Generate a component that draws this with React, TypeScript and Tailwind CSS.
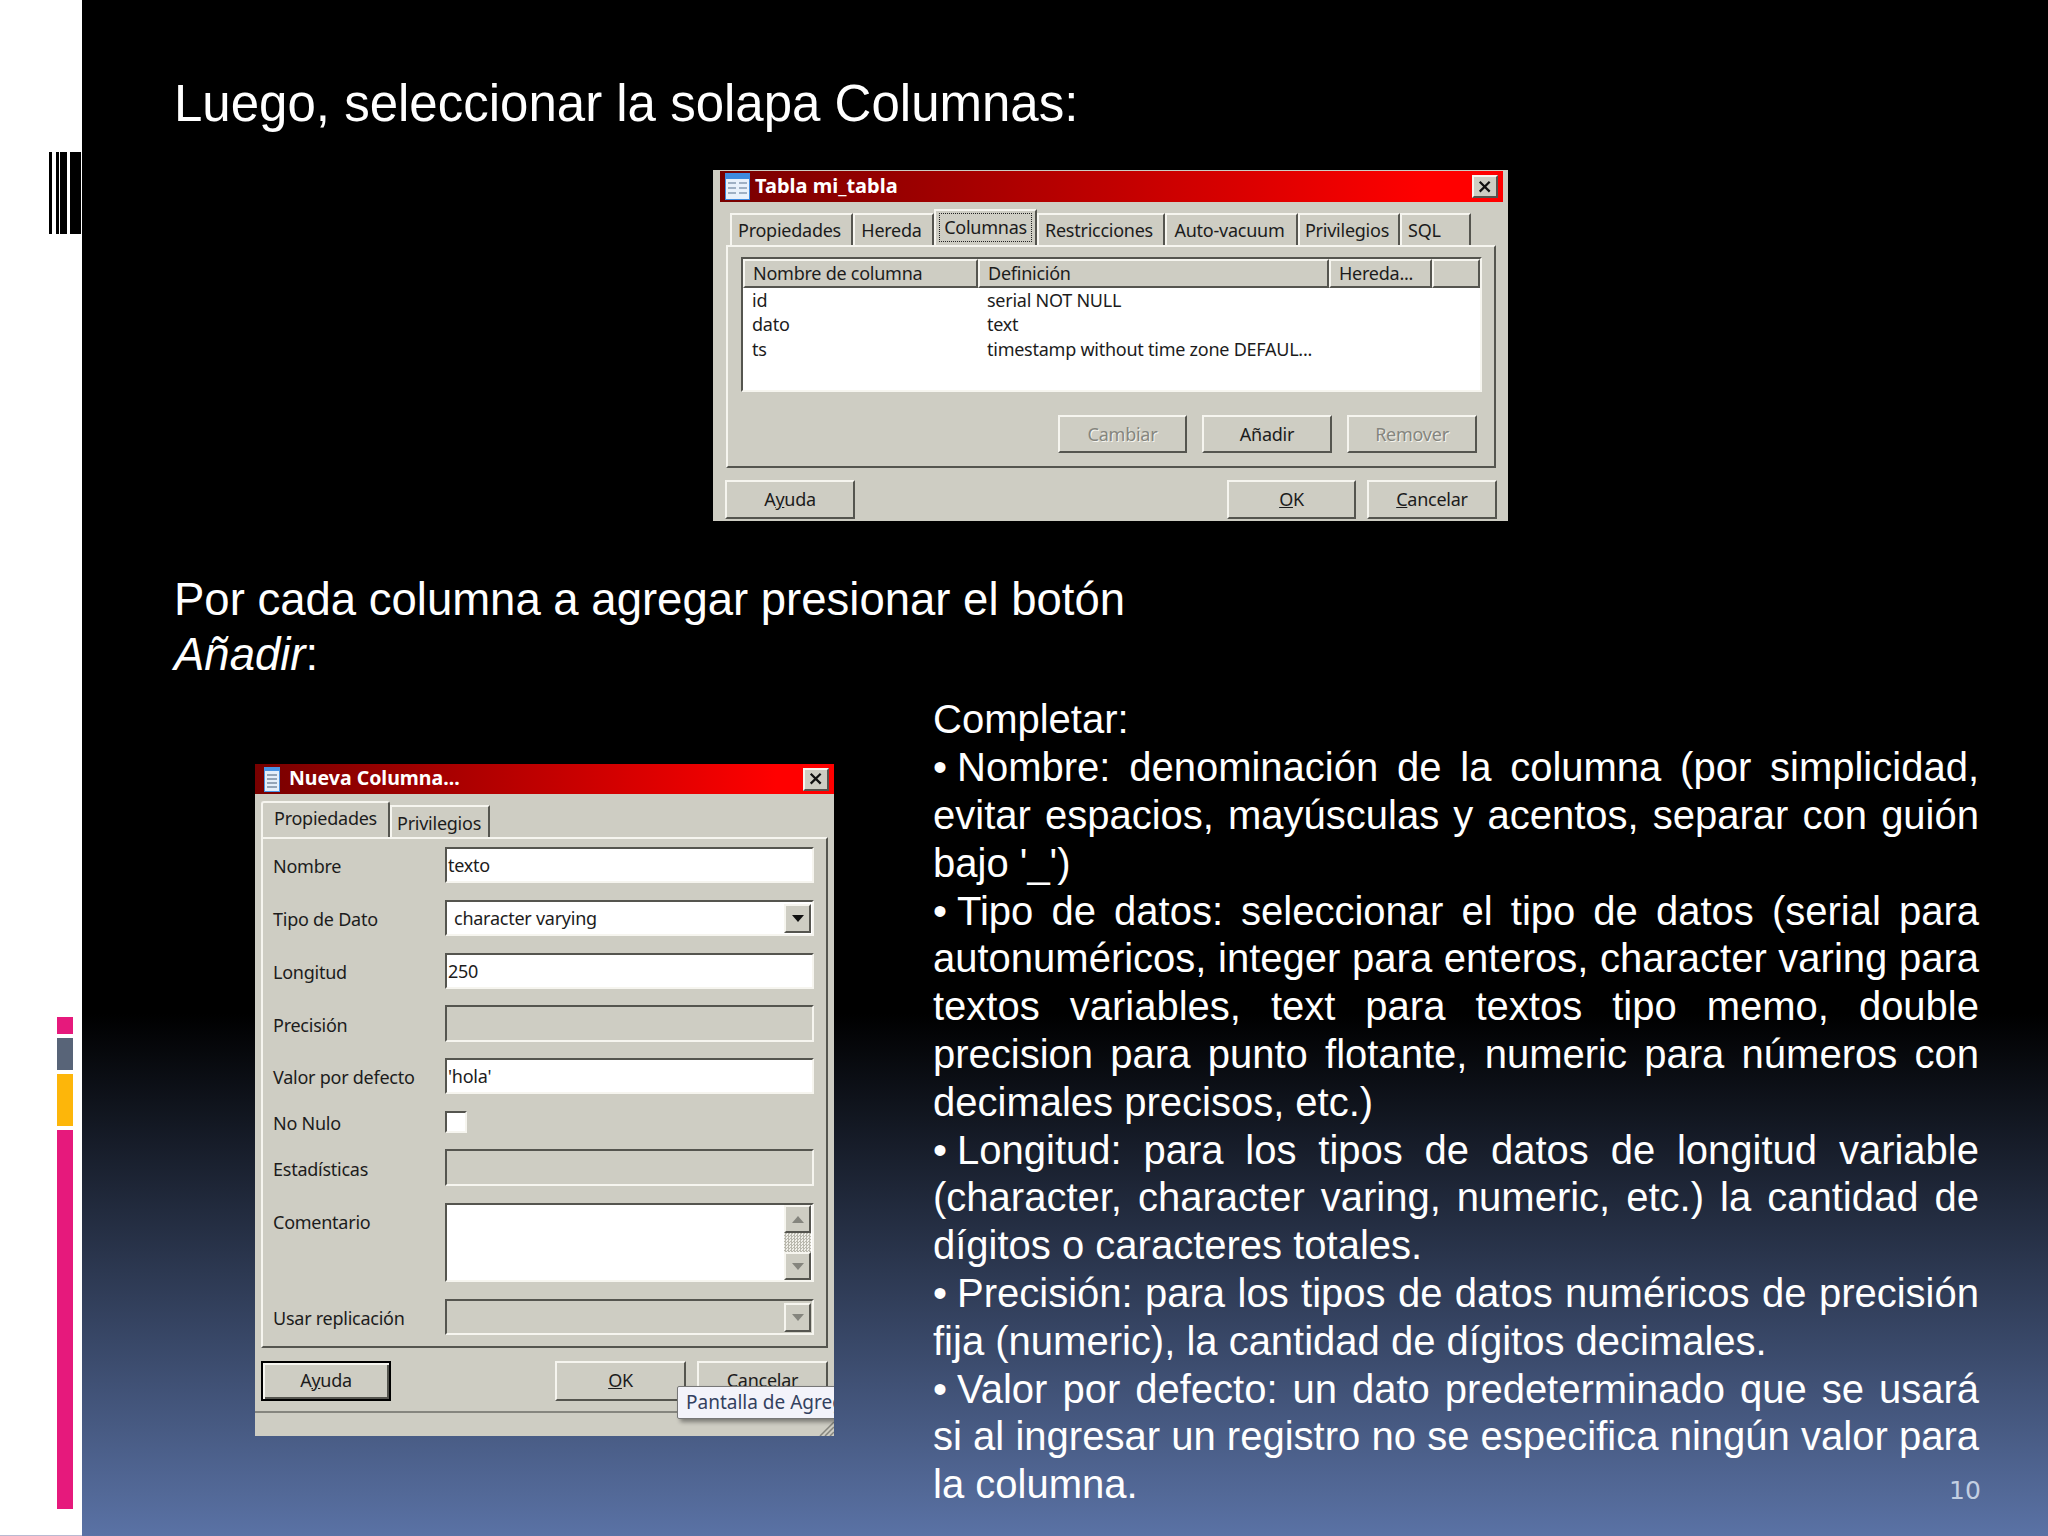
import type { ReactNode } from 'react';

const RAISED = 'border-2 border-t-[#f6f5ef] border-l-[#f6f5ef] border-r-[#55554f] border-b-[#55554f]';
const SUNKEN = 'border-2 border-t-[#55554f] border-l-[#55554f] border-r-[#f6f5ef] border-b-[#f6f5ef]';
const UI_FONT = "font-['Noto_Sans',sans-serif] tracking-[-0.25px]";

function WinButton({
  children,
  width,
  disabled,
  dark,
  className = '',
}: {
  children: ReactNode;
  width: string;
  disabled?: boolean;
  dark?: boolean;
  className?: string;
}) {
  return (
    <div
      className={`${width} h-full flex items-center justify-center text-[18px] bg-[#cecdc3] ${
        dark ? 'border-2 border-black pb-[2px] shadow-[inset_2px_2px_0_#f6f5ef,inset_-2px_-2px_0_#55554f]' : RAISED
      } ${disabled ? 'text-[#85857e] [text-shadow:1px_1px_0_#f6f5ef]' : 'text-[#1c1c1c]'} ${className}`}
    >
      {children}
    </div>
  );
}

function CloseButton({ size }: { size: string }) {
  return (
    <div className={`${size} ${RAISED} bg-[#cecdc3] flex items-center justify-center`}>
      <svg viewBox="0 0 12 12" className="w-[70%] h-[70%]">
        <path d="M1.5 1.5 L10.5 10.5 M10.5 1.5 L1.5 10.5" stroke="#111" strokeWidth="2" fill="none" />
      </svg>
    </div>
  );
}

function TableIcon() {
  return (
    <svg viewBox="0 0 25 27" className="w-[25px] h-[27px] shrink-0">
      <rect x="0.5" y="0.5" width="24" height="26" fill="#e9f1fb" stroke="#3f8be0" />
      <rect x="1" y="1" width="23" height="5" fill="#3f8be0" />
      <path d="M3 10h8M14 10h8M3 15h8M14 15h8M3 20h8M14 20h8" stroke="#9fb0c4" strokeWidth="2" />
    </svg>
  );
}

function ColumnIcon() {
  return (
    <svg viewBox="0 0 16 25" className="w-[16px] h-[25px] shrink-0">
      <rect x="0.5" y="0.5" width="15" height="24" fill="#e4eefa" stroke="#4a94e4" />
      <rect x="1" y="1" width="14" height="3" fill="#4a94e4" />
      <path d="M3 8h10M3 12h10M3 16h10M3 20h10" stroke="#93a4b8" strokeWidth="2" />
    </svg>
  );
}

function Arrow({ up, muted }: { up?: boolean; muted?: boolean }) {
  return (
    <svg viewBox="0 0 12 7" className="w-[12px] h-[7px]">
      <path d={up ? 'M6 0 L12 7 L0 7 Z' : 'M0 0 L12 0 L6 7 Z'} fill={muted ? '#85857e' : '#111'} />
    </svg>
  );
}

function ArrowButton({ up, muted }: { up?: boolean; muted?: boolean }) {
  return (
    <div className={`w-[27px] h-[29px] ${RAISED} bg-[#cecdc3] flex items-center justify-center`}>
      <Arrow up={up} muted={muted} />
    </div>
  );
}

const MAIN_TABS = [
  { label: 'Propiedades', width: 'w-[123px]' },
  { label: 'Hereda', width: 'w-[81px]' },
  { label: 'Columnas', width: 'w-[103px]', active: true },
  { label: 'Restricciones', width: 'w-[128px]' },
  { label: 'Auto-vacuum', width: 'w-[133px]' },
  { label: 'Privilegios', width: 'w-[102px]' },
  { label: 'SQL', width: 'w-[71px]', left: true },
];

const COLUMN_ROWS = [
  ['id', 'serial NOT NULL'],
  ['dato', 'text'],
  ['ts', 'timestamp without time zone DEFAUL...'],
];

function TablaDialog() {
  return (
    <div className={`w-[795px] h-[351px] ml-[539px] mt-[39px] bg-[#cecdc3] pt-[1px] text-[#1c1c1c] ${UI_FONT}`}>
      <div className="mx-[7px] mr-[5px] h-[31px] flex items-center pl-[5px] pr-[5px] bg-linear-to-r from-[#780000] to-[#ff0000] to-90%">
        <TableIcon />
        <span className="ml-[5px] pb-[2px] text-white font-bold text-[20px] tracking-normal">Tabla mi_tabla</span>
        <div className="ml-auto">
          <CloseButton size="w-[26px] h-[23px]" />
        </div>
      </div>

      <div className="flex items-end h-[43px] ml-[17px]">
        {MAIN_TABS.map((tab) => (
          <div
            key={tab.label}
            className={`${tab.width} shrink-0 flex items-center text-[18px] border-t-2 border-l-2 border-r-2 border-t-[#f6f5ef] border-l-[#f6f5ef] border-r-[#55554f] ${
              tab.left ? 'pl-[6px]' : 'justify-center'
            } ${tab.active ? 'h-[36px] pb-[2px]' : 'h-[32px] pr-[4px]'}`}
          >
            {tab.active ? (
              <span className="border border-dotted border-[#222] px-[4px] leading-[27px]">{tab.label}</span>
            ) : (
              tab.label
            )}
          </div>
        ))}
      </div>

      <div className={`ml-[13px] w-[770px] h-[223px] ${RAISED} pt-[10px] pl-[13px]`}>
        <div className={`w-[741px] h-[135px] ${SUNKEN} bg-white flex flex-col overflow-hidden`}>
          <div className="flex h-[29px] shrink-0 bg-[#cecdc3] text-[18px]">
            <div className={`w-[235px] ${RAISED} pl-[8px] flex items-center`}>Nombre de columna</div>
            <div className={`w-[351px] ${RAISED} pl-[8px] flex items-center`}>Definición</div>
            <div className={`w-[103px] ${RAISED} pl-[8px] flex items-center`}>Hereda...</div>
            <div className={`flex-1 ${RAISED}`} />
          </div>
          <div>
            {COLUMN_ROWS.map(([name, definition]) => (
              <div key={name} className="flex h-[24.5px] items-center text-[18px]">
                <div className="w-[235px] pl-[9px]">{name}</div>
                <div className="pl-[9px]">{definition}</div>
              </div>
            ))}
          </div>
        </div>
        <div className="flex h-[38px] mt-[23px] ml-[317px] gap-[15px]">
          <WinButton width="w-[129px]" disabled>Cambiar</WinButton>
          <WinButton width="w-[130px]">Añadir</WinButton>
          <WinButton width="w-[130px]" disabled>Remover</WinButton>
        </div>
      </div>

      <div className="flex h-[39px] mt-[12px] ml-[12px] w-[772px]">
        <WinButton width="w-[130px]"><span>A<u>y</u>uda</span></WinButton>
        <WinButton width="w-[129px]" className="ml-auto"><span><u>O</u>K</span></WinButton>
        <WinButton width="w-[130px]" className="ml-[11px]"><span><u>C</u>ancelar</span></WinButton>
      </div>
    </div>
  );
}

function FormRow({
  label,
  top,
  height = 'h-[36px]',
  alignTop,
  children,
}: {
  label: string;
  top: string;
  height?: string;
  alignTop?: boolean;
  children: ReactNode;
}) {
  return (
    <div className={`flex ${top} ${height} ${alignTop ? 'items-start' : 'items-center'}`}>
      <div className={`w-[172px] shrink-0 text-[18px] ${alignTop ? 'pt-[6px]' : 'pt-[3px]'}`}>{label}</div>
      {children}
    </div>
  );
}

function Field({ value, disabled, pad = 'pl-[1px]', children }: { value?: string; disabled?: boolean; pad?: string; children?: ReactNode }) {
  return (
    <div
      className={`w-[369px] h-full ${SUNKEN} ${disabled ? 'bg-[#cecdc3]' : 'bg-white'} ${pad} flex items-center text-[18px] text-[#1c1c1c]`}
    >
      {value}
      {children && <div className="ml-auto mr-[1px] flex">{children}</div>}
    </div>
  );
}

function ColumnaDialog() {
  return (
    <div className={`relative w-[579px] h-[672px] ml-[81px] mt-[68px] shrink-0 bg-[#cecdc3] overflow-hidden text-[#1c1c1c] ${UI_FONT}`}>
      <div className="h-[30px] flex items-center pl-[9px] pr-[5px] bg-linear-to-r from-[#780000] to-[#ff0000] to-90%">
        <ColumnIcon />
        <span className="ml-[9px] pb-[2px] text-white font-bold text-[19.5px] tracking-normal">Nueva Columna...</span>
        <div className="ml-auto">
          <CloseButton size="w-[26px] h-[23px]" />
        </div>
      </div>

      <div className="flex items-end h-[35px] mt-[8px] ml-[6px]">
        <div className="w-[129px] h-[36px] shrink-0 flex items-center pl-[11px] pb-[3px] text-[18px] border-t-2 border-l-2 border-r-2 border-t-[#f6f5ef] border-l-[#f6f5ef] border-r-[#55554f] rounded-t-[3px]">
          Propiedades
        </div>
        <div className="w-[100px] h-[32px] shrink-0 flex items-center pl-[5px] pt-[2px] text-[18px] border-t-2 border-l-2 border-r-2 border-t-[#f6f5ef] border-l-[#f6f5ef] border-r-[#55554f]">
          Privilegios
        </div>
      </div>

      <div className={`ml-[6px] w-[567px] h-[511px] ${RAISED} pl-[10px]`}>
        <FormRow label="Nombre" top="mt-[8px]"><Field value="texto" /></FormRow>
        <FormRow label="Tipo de Dato" top="mt-[17px]">
          <Field value="character varying" pad="pl-[7px]">
            <ArrowButton />
          </Field>
        </FormRow>
        <FormRow label="Longitud" top="mt-[17px]"><Field value="250" /></FormRow>
        <FormRow label="Precisión" top="mt-[16px]" height="h-[37px]"><Field disabled /></FormRow>
        <FormRow label="Valor por defecto" top="mt-[16px]"><Field value="'hola'" /></FormRow>
        <FormRow label="No Nulo" top="mt-[17px]" height="h-[22px]">
          <div className={`w-[22px] h-[22px] ${SUNKEN} bg-white`} />
        </FormRow>
        <FormRow label="Estadísticas" top="mt-[16px]" height="h-[37px]"><Field disabled /></FormRow>
        <FormRow label="Comentario" top="mt-[17px]" height="h-[79px]" alignTop>
          <div className={`w-[369px] h-full ${SUNKEN} bg-white flex justify-end pr-[1px]`}>
            <div className="flex flex-col w-[27px] h-full">
              <div className={`h-[28px] ${RAISED} bg-[#cecdc3] flex items-center justify-center`}>
                <Arrow up muted />
              </div>
              <div className="flex-1 bg-[repeating-conic-gradient(#b9b8ae_0_25%,#f0efe9_0_50%)] bg-[length:3px_3px]" />
              <div className={`h-[28px] ${RAISED} bg-[#cecdc3] flex items-center justify-center`}>
                <Arrow muted />
              </div>
            </div>
          </div>
        </FormRow>
        <FormRow label="Usar replicación" top="mt-[17px]">
          <Field disabled>
            <ArrowButton muted />
          </Field>
        </FormRow>
      </div>

      <div className="flex h-[40px] mt-[13px] ml-[6px] w-[567px]">
        <WinButton width="w-[130px]" dark><span>A<u>y</u>uda</span></WinButton>
        <WinButton width="w-[131px]" className="ml-auto pb-[2px]"><span><u>O</u>K</span></WinButton>
        <WinButton width="w-[131px]" className="ml-[11px] pb-[2px]">Cancelar</WinButton>
      </div>

      <div className="mt-[10px] h-[25px] border-t-2 border-t-[#85857e] relative">
        <svg viewBox="0 0 16 16" className="absolute right-0 bottom-0 w-[16px] h-[16px]">
          <path d="M16 2 L2 16 M16 7 L7 16 M16 12 L12 16" stroke="#85857e" strokeWidth="1.5" />
        </svg>
      </div>

      <div className="absolute left-[422px] top-[622px] w-[200px] h-[33px] bg-[#f3f3fa] border border-[#777] rounded-[2px] shadow-[3px_3px_4px_rgba(0,0,0,0.4)] pl-[8px] flex items-center text-[19px] tracking-normal text-[#33415f] whitespace-nowrap">
        Pantalla de Agregar
      </div>
    </div>
  );
}

const HELP_ITEMS = [
  'Completar:',
  "•\u2005Nombre: denominación de la columna (por simplicidad, evitar espacios, mayúsculas y acentos, separar con guión bajo '_')",
  '•\u2005Tipo de datos: seleccionar el tipo de datos (serial para autonuméricos, integer para enteros, character varing para textos variables, text para textos tipo memo, double precision para punto flotante, numeric para números con decimales precisos, etc.)',
  '•\u2005Longitud: para los tipos de datos de longitud variable (character, character varing, numeric, etc.) la cantidad de dígitos o caracteres totales.',
  '•\u2005Precisión: para los tipos de datos numéricos de precisión fija (numeric), la cantidad de dígitos decimales.',
  '•\u2005Valor por defecto: un dato predeterminado que se usará si al ingresar un registro no se especifica ningún valor para la columna.',
];

export default function App() {
  return (
    <div className="w-[2048px] h-[1536px] flex overflow-hidden font-['Liberation_Sans',Arial,sans-serif]">
      {/* Left strip */}
      <div className="w-[82px] shrink-0 bg-white border-b border-b-[#b9b9d2] flex flex-col">
        <div className="flex h-[82px] mt-[152px] ml-[49px] w-[32px]">
          <div className="w-[3px] bg-black" />
          <div className="w-[3px] ml-[4px] bg-black" />
          <div className="w-[7px] ml-[1px] bg-black" />
          <div className="w-[11px] ml-[3px] bg-black" />
        </div>
        <div className="flex flex-col w-[16px] ml-[57px] mt-[783px] gap-[4px]">
          <div className="h-[17px] bg-[#e6197c]" />
          <div className="h-[32px] bg-[#586478]" />
          <div className="h-[52px] bg-[#fdb60a]" />
          <div className="h-[379px] bg-[#e6197c]" />
        </div>
      </div>

      {/* Slide */}
      <div className="relative flex-1 pl-[92px] pt-[76px] text-white bg-[linear-gradient(180deg,#000_0%,#000_66%,#5a72a5_100%)]">
        <h1 className="text-[51px] leading-[55px]">Luego, seleccionar la solapa Columnas:</h1>
        <TablaDialog />
        <p className="mt-[51px] text-[45.5px] leading-[55px]">
          Por cada columna a agregar presionar el botón
          <br />
          <em>Añadir</em>:
        </p>
        <div className="flex mt-[14px] items-start">
          <ColumnaDialog />
          <div className="ml-[99px] w-[1046px] pt-[0.4px] text-[40px] leading-[47.8px] text-justify">
            {HELP_ITEMS.map((item) => (
              <p key={item}>{item}</p>
            ))}
          </div>
        </div>
        <span className="absolute left-[1867px] top-[1477px] text-[25px] leading-[28px] text-[#c3cfe2] font-['DejaVu_Sans',sans-serif]">
          10
        </span>
      </div>
    </div>
  );
}
